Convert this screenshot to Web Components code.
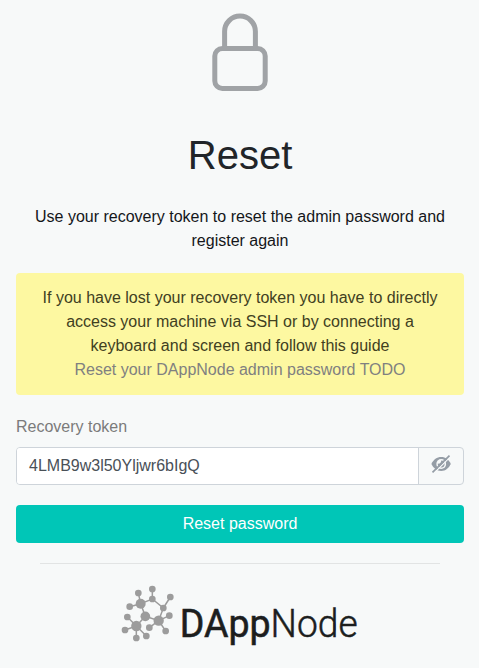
<!DOCTYPE html>
<html lang="en"><head><meta charset="utf-8"><title>Reset</title>
<style>
body{margin:0;background:#f7f9f9;font:16px/24px "Liberation Sans",Arial,sans-serif;color:#212529}
</style></head><body>
<reset-page></reset-page>
<script>
const define=(name,html)=>customElements.define(name,class extends HTMLElement{
  constructor(){super();this.attachShadow({mode:'open'}).innerHTML=html;}
});
define('lock-icon',`<style>:host{display:block;height:78px}svg{display:block;margin:auto}</style>
<svg width="56" height="78" viewBox="0 0 56 78" fill="none" stroke="#a0a3a6" stroke-width="5"><rect x="2.8" y="35.5" width="50.4" height="40" rx="7.5"/><path d="M12.6 35V18.5a15.4 15.4 0 0 1 30.8 0V35"/></svg>`);
define('page-title',`<style>:host{display:block}h1{margin:0;font-size:40px;line-height:48px;font-weight:400;text-align:center}</style><h1><slot></slot></h1>`);
define('alert-box',`<style>:host{display:block;background:#fdf8a1;border-radius:4px;padding:13px 21px;text-align:center;color:#41401f}::slotted(a){color:#808080;display:block}</style><slot></slot>`);
define('eye-slash-icon',`<style>:host{display:block;width:20px;height:18px}svg{display:block}</style>
<svg width="20" height="18" viewBox="0 0 20 18"><path d="M.4 9C2.6 4.6 5.8 2.1 10.2 2.1s7.4 2.5 9.6 6.9c-2.2 4.4-5.2 6.9-9.6 6.9S2.6 13.4.4 9Z" fill="#959da6"/><circle cx="10.2" cy="9" r="4.9" fill="#f7f9f9"/><path d="M10.2 5.6a3.4 3.4 0 1 1-3.4 3c1.9.6 3.5-1 3.4-3Z" fill="#959da6"/><path d="M2.9 18.2 19.8 1.4" stroke="#f7f9f9" stroke-width="1.3"/><path d="M1.5 17.4 18.5.6" stroke="#959da6" stroke-width="1.7"/></svg>`);
define('token-field',`<style>:host{display:block}label{display:block;color:#7b7b7b;margin-bottom:8px}
.group{display:flex;height:38px;box-sizing:border-box;border:1px solid #ced4da;border-radius:4px;overflow:hidden}
.value{flex:1;background:#fff;color:#495057;padding:6px 12px}
.toggle{width:44px;border-left:1px solid #ced4da;display:flex;justify-content:center;padding-top:7px}</style>
<label><slot name="label"></slot></label><div class="group"><div class="value"><slot></slot></div><div class="toggle"><eye-slash-icon></eye-slash-icon></div></div>`);
define('primary-button',`<style>:host{display:block}button{display:block;width:100%;height:38px;border:0;border-radius:4px;background:#00c6b7;color:#fff;font:inherit;padding:0}</style><button><slot></slot></button>`);
define('brand-logo',`<style>:host{display:block}svg{display:block}text{font-family:Roboto,"Open Sans",sans-serif;font-size:39.4px;fill:#1c1e1e;stroke:#1c1e1e}</style>
<svg width="260" height="68" viewBox="0 0 260 68">
<g transform="scale(.33333)" stroke="#9c9c9c" stroke-width="4.5" fill="none"><path d="M77 71 112 57 145 84 131 122 91 109Z M77 71 70 39M77 71 44 80M112 57V27M145 84 166 51M131 122 163 107M131 122 152 153M131 122 103 143M91 109 64 138M64 138 37 111M64 138 30 150M64 138V174M64 138 94 168"/>
<g fill="#9c9c9c" stroke="none"><circle cx="77" cy="71" r="15"/><circle cx="91" cy="109" r="14.5"/><circle cx="131" cy="122" r="15.5"/><circle cx="64" cy="138" r="15.5"/><circle cx="70" cy="39" r="10"/><circle cx="112" cy="27" r="10"/><circle cx="112" cy="57" r="10"/><circle cx="166" cy="51" r="10"/><circle cx="145" cy="84" r="10"/><circle cx="44" cy="80" r="10"/><circle cx="37" cy="111" r="10"/><circle cx="30" cy="150" r="10"/><circle cx="64" cy="174" r="10"/><circle cx="94" cy="168" r="10"/><circle cx="103" cy="143" r="10"/><circle cx="163" cy="107" r="10"/><circle cx="152" cy="153" r="10"/></g></g>
<text x="64.8" y="57" font-weight="400" stroke-width=".6" textLength="90.7" lengthAdjust="spacingAndGlyphs">DApp</text><text x="155.6" y="57" font-weight="300" stroke-width=".5" textLength="87" lengthAdjust="spacingAndGlyphs">Node</text></svg>`);
define('reset-page',`<style>:host{display:block;box-sizing:border-box;height:668px;padding:13px 15px 0 16px;overflow:hidden}
page-title{margin-top:40px}p{margin:26px 0 20px;text-align:center;color:#14161a}
token-field{margin-top:20px}primary-button{margin-top:20px}
hr{margin:20px 24px 0;border:0;border-top:1px solid #e2e4e4}brand-logo{margin:16px 0 0 99px}</style>
<lock-icon></lock-icon><page-title>Reset</page-title>
<p>Use your recovery token to reset the admin password and register again</p>
<alert-box>If you have lost your recovery token you have to directly access your machine via SSH or by connecting a keyboard and screen and follow this guide <a>Reset your DAppNode admin password TODO</a></alert-box>
<token-field><span slot="label">Recovery token</span>4LMB9w3l50Yljwr6bIgQ</token-field>
<primary-button>Reset password</primary-button><hr><brand-logo></brand-logo>`);
</script></body></html>
